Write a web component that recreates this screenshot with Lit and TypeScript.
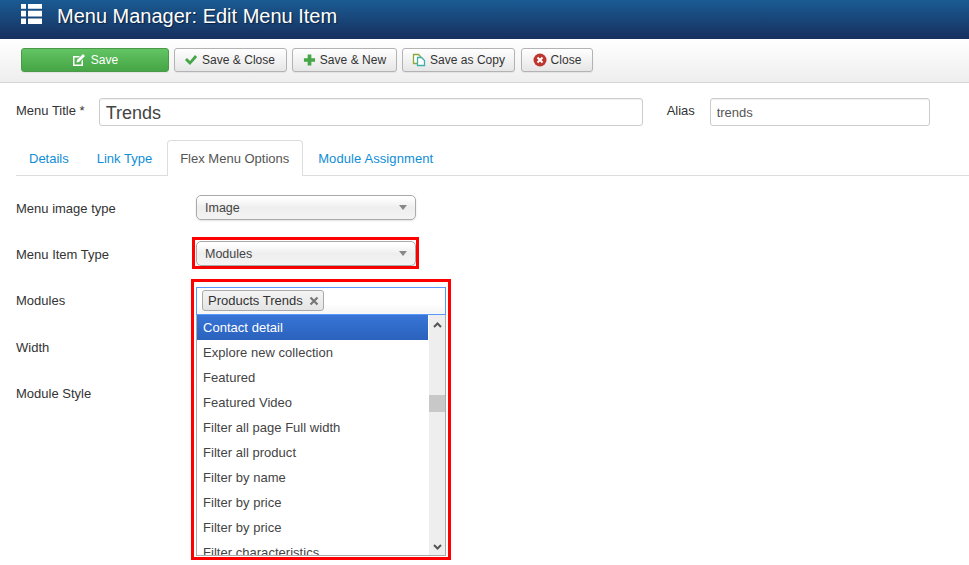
import { LitElement, html, css, svg } from "lit";
import { customElement } from "lit/decorators.js";

const items = ["Explore new collection","Featured","Featured Video","Filter all page Full width","Filter all product","Filter by name","Filter by price","Filter by price","Filter characteristics"];

@customElement("app-root")
export class AppRoot extends LitElement {
  static styles = css`
    :host { display:block; width:969px; height:565px; overflow:hidden; background:#fff; font-family:"Liberation Sans",Arial,sans-serif; font-size:13px; color:#333; }
    * { box-sizing:border-box; }
    .head { height:39px; background:linear-gradient(#1a5b93,#17305e); display:flex; align-items:center; padding-left:21px; gap:15px; color:#fff; }
    .head h1 { margin:-7px 0 0; font-size:20px; font-weight:400; line-height:32px; text-shadow:1px 1px 1px #0b2140; }
    .head svg { margin-top:-11px; }
    .bar { height:44px; background:linear-gradient(#fff,#eeeeee); border-bottom:1px solid #d6d6d6; display:flex; align-items:center; padding:0 0 2px 21px; gap:5px; }
    .btn { height:24px; border:1px solid #b3b3b3; border-radius:3px; background:linear-gradient(#fff,#e6e6e6); display:flex; align-items:center; justify-content:center; gap:4px; font-size:12px; letter-spacing:.03px; color:#333; box-shadow:0 1px 1px rgba(0,0,0,.06); }
    .save { width:148px; background:linear-gradient(#62c462,#46a546); border-color:#4a9a4a; color:#fff; gap:5px; }
    .w1 { width:113px; padding-right:2px; } .w2 { width:105px; } .w3 { width:113px; } .w4 { width:72px; margin-left:1px; }
    .title { display:flex; align-items:flex-start; padding:15px 0 0 16px; height:57px; }
    .title label { line-height:26px; font-size:13px; }
    input.t { display:block; height:28px; border:1px solid #ccc; border-radius:3px; background:#fff; padding:1px 6px 0; font:inherit; color:#555; box-shadow:inset 0 1px 1px rgba(0,0,0,.06); outline:none; }
    .t1 { width:544px; margin-left:14px; font-size:18px !important; color:#444 !important; padding-top:3px !important; }
    .alias { margin-left:24px; width:43px; }
    .t2 { width:220px; font-size:13px; }
    .tabs { display:flex; height:36px; margin-left:16px; border-bottom:1px solid #ddd; font-size:13px; }
    .tab { padding:0 13px; line-height:37px; color:#0f8ed6; margin-right:2px; height:36px; }
    .tab.on { color:#555; background:#fff; border:1px solid #ddd; border-bottom:0; border-radius:4px 4px 0 0; line-height:36px; padding:0 12px; height:36px; width:136px; }
    .tab.last { letter-spacing:.1px; }
    .form { padding:19px 0 0 16px; }
    .row { height:46px; display:flex; font-size:13px; position:relative; }
    .row.gap { margin-top:1px; }
    .row > label { width:180px; line-height:28px; }
    .select { width:220px; height:25px; border:1px solid #aaa; border-radius:5px; background:linear-gradient(#fff 10%,#eee 50%,#f4f4f4); display:flex; align-items:center; justify-content:space-between; padding:0 8px; font-size:12.5px; color:#444; box-shadow:0 1px 2px rgba(0,0,0,.12); }
    .arrow { width:0; height:0; border:4px solid transparent; border-top:5px solid #888; border-bottom:0; margin-top:-1px; }
    .red { border:3px solid #f00; }
    .r2 { margin:-4px 0 0 -4px; width:227px; height:32px; padding:1px 0 0 1px; }
    .r3 { position:absolute; left:175px; top:-8px; width:260px; height:281px; padding:5px 2px 0 2px; background:#fff; z-index:1; }
    .chosen { width:250px; height:28px; border:1px solid #5897fb; background:linear-gradient(#fff 60%,#f4f4f4); padding:2px 5px; box-shadow:inset 0 0 3px #fff; }
    .tag { display:inline-flex; align-items:center; height:21px; border:1px solid #aaa; border-radius:3px; background:linear-gradient(#f4f4f4,#e4e4e4); padding:0 4px 0 5px; gap:6px; font-size:13px; color:#333; }
    .list { width:250px; height:241px; border:1px solid #aaa; border-top:0; display:flex; overflow:hidden; }
    .opts { flex:1; overflow:hidden; }
    .opt { height:25px; line-height:26px; padding:0 6px; font-size:13px; letter-spacing:.03px; color:#444; white-space:nowrap; }
    .opt.hi { background:linear-gradient(#3875d7,#2a62bc); color:#fff; }
    .sb { width:16px; margin-left:1px; background:#eee; position:relative; display:flex; flex-direction:column; justify-content:space-between; align-items:center; padding:7px 0 5px; }
    .thumb { position:absolute; left:0; right:0; top:80px; height:17px; background:#c8c8c8; }
  `;

  private ico(c: any, w = 14, h = 14) { return html`<svg width=${w} height=${h} viewBox="0 0 14 14">${c}</svg>`; }

  render() {
    return html`
      <div class="head">
        <svg width="21" height="20" viewBox="0 0 21 20" fill="#fff"><path d="M0 0h5v4.700H0zM7 0h14v4.700H7zM0 6.800h5v5.600H0zM7 6.800h14v5.600H7zM0 14.600h5V20H0zM7 14.600h14V20H7z"/></svg>
        <h1>Menu Manager: Edit Menu Item</h1>
      </div>
      <div class="bar">
        <div class="btn save">${this.ico(svg`<path d="M1 3h7L6.500 4.500H2.500v7h7V8L11 6.500V13H1z" fill="#fff"/><path d="M5 7l6-6 2 2-6 6-2.500.5z" fill="#fff"/>`)}Save</div>
        <div class="btn w1">${this.ico(svg`<path d="M1 7l2-2 3 3 5-6 2.200 2L6 12z" fill="#46a546"/>`)}Save &amp; Close</div>
        <div class="btn w2">${this.ico(svg`<path d="M5 1h4v4h4v4H9v4H5V9H1V5h4z" fill="#46a546"/>`, 13, 14)}Save &amp; New</div>
        <div class="btn w3">${this.ico(svg`<path d="M1.500 1.500h5l2 2v7h-7z" fill="#fff" stroke="#8aa83c" stroke-width="1.300"/><path d="M5.500 4.500h4l3 3v5h-7z" fill="#fff" stroke="#3fb0a8" stroke-width="1.300"/>`)}Save as Copy</div>
        <div class="btn w4">${this.ico(svg`<circle cx="7" cy="7" r="6.500" fill="#bd362f"/><path d="M4.500 4.500l5 5M9.500 4.500l-5 5" stroke="#fff" stroke-width="2"/>`)}Close</div>
      </div>
      <div class="title">
        <label>Menu Title *</label>
        <input class="t t1" .value=${"Trends"} />
        <label class="alias">Alias</label>
        <input class="t t2" .value=${"trends"} />
      </div>
      <div class="tabs">
        <div class="tab">Details</div>
        <div class="tab">Link Type</div>
        <div class="tab on">Flex Menu Options</div>
        <div class="tab last">Module Assignment</div>
      </div>
      <div class="form">
        <div class="row"><label>Menu image type</label><div class="select">Image<span class="arrow"></span></div></div>
        <div class="row"><label>Menu Item Type</label><div class="red r2"><div class="select">Modules<span class="arrow"></span></div></div></div>
        <div class="row"><label>Modules</label>
          <div class="red r3">
            <div class="chosen"><span class="tag">Products Trends <svg width="10" height="10" viewBox="0 0 10 10"><path d="M1.500 1.500l7 7M8.500 1.500l-7 7" stroke="#777" stroke-width="2.200"/></svg></span></div>
            <div class="list">
              <div class="opts">
                <div class="opt hi">Contact detail</div>
                ${items.map((i) => html`<div class="opt">${i}</div>`)}
              </div>
              <div class="sb">
                <svg width="9" height="6" viewBox="0 0 9 6"><path d="M1 5l3.500-3.500L8 5" fill="none" stroke="#555" stroke-width="2"/></svg>
                <div class="thumb"></div>
                <svg width="9" height="6" viewBox="0 0 9 6"><path d="M1 1l3.500 3.500L8 1" fill="none" stroke="#555" stroke-width="2"/></svg>
              </div>
            </div>
          </div>
        </div>
        <div class="row gap"><label>Width</label></div>
        <div class="row"><label>Module Style</label></div>
      </div>
    `;
  }
}
